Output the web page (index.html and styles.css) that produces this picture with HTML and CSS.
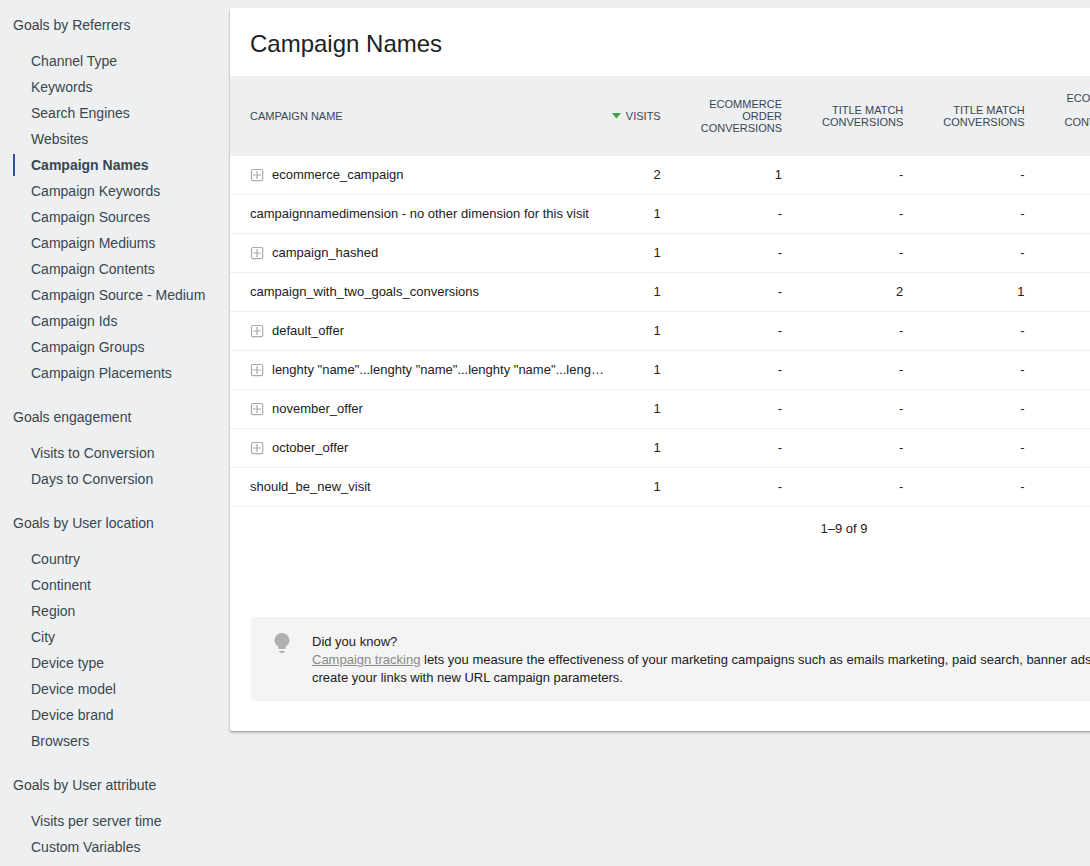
FILE: index.html
```html
<!DOCTYPE html>
<html lang="en">
<head>
<meta charset="utf-8">
<title>Campaign Names</title>
<link rel="stylesheet" href="styles.css">
</head>
<body>
<div class="layout">
<nav class="sidebar">
<h3 class="category">Goals by Referrers</h3>
<ul class="menu"><li>Channel Type</li><li>Keywords</li><li>Search Engines</li><li>Websites</li><li class="active">Campaign Names</li><li>Campaign Keywords</li><li>Campaign Sources</li><li>Campaign Mediums</li><li>Campaign Contents</li><li>Campaign Source - Medium</li><li>Campaign Ids</li><li>Campaign Groups</li><li>Campaign Placements</li></ul>
<h3 class="category">Goals engagement</h3>
<ul class="menu"><li>Visits to Conversion</li><li>Days to Conversion</li></ul>
<h3 class="category">Goals by User location</h3>
<ul class="menu"><li>Country</li><li>Continent</li><li>Region</li><li>City</li><li>Device type</li><li>Device model</li><li>Device brand</li><li>Browsers</li></ul>
<h3 class="category">Goals by User attribute</h3>
<ul class="menu"><li>Visits per server time</li><li>Custom Variables</li></ul>
</nav>
<main class="card">
<h2 class="title">Campaign Names</h2>
<svg class="defs" width="0" height="0"><symbol id="plus" viewBox="0 0 14 14"><rect x="1.500" y="1.500" width="11.200" height="11.200" rx="1.500"/><path d="M7 3v8M3 7h8"/></symbol></svg>
<table class="data">
<colgroup><col class="c-name"><col class="c-visits"><col class="c-num"><col class="c-num"><col class="c-num"><col class="c-num"><col></colgroup>
<thead><tr><th>Campaign Name</th><th><svg class="sort" viewBox="0 0 9 6"><path d="M0 0h9L4.500 5.500z"/></svg>Visits</th><th>Ecommerce<br>Order<br>Conversions</th><th>Title Match<br>Conversions</th><th>Title Match<br>Conversions</th><th>Ecommerce -<br>Order<br>Conversions<br>Rate</th><th></th></tr></thead>
<tbody>
<tr><td><svg class="plus"><use href="#plus"/></svg>ecommerce_campaign</td><td>2</td><td>1</td><td>-</td><td>-</td><td></td><td></td></tr>
<tr><td>campaignnamedimension - no other dimension for this visit</td><td>1</td><td>-</td><td>-</td><td>-</td><td></td><td></td></tr>
<tr><td><svg class="plus"><use href="#plus"/></svg>campaign_hashed</td><td>1</td><td>-</td><td>-</td><td>-</td><td></td><td></td></tr>
<tr><td>campaign_with_two_goals_conversions</td><td>1</td><td>-</td><td>2</td><td>1</td><td></td><td></td></tr>
<tr><td><svg class="plus"><use href="#plus"/></svg>default_offer</td><td>1</td><td>-</td><td>-</td><td>-</td><td></td><td></td></tr>
<tr><td><svg class="plus"><use href="#plus"/></svg>lenghty "name"...lenghty "name"...lenghty "name"...leng…</td><td>1</td><td>-</td><td>-</td><td>-</td><td></td><td></td></tr>
<tr><td><svg class="plus"><use href="#plus"/></svg>november_offer</td><td>1</td><td>-</td><td>-</td><td>-</td><td></td><td></td></tr>
<tr><td><svg class="plus"><use href="#plus"/></svg>october_offer</td><td>1</td><td>-</td><td>-</td><td>-</td><td></td><td></td></tr>
<tr><td>should_be_new_visit</td><td>1</td><td>-</td><td>-</td><td>-</td><td></td><td></td></tr>
</tbody>
</table>
<div class="pages">1–9 of 9</div>
<aside class="tip">
<svg class="bulb" viewBox="0 0 16 21"><path d="M8 0C3.900 0 .5 3.300.500 7.400c0 2.600 1.500 4.800 3.700 6.200v1.500q0 .9.900.9h5.800q.9 0 .9-.9v-1.500c2.200-1.400 3.700-3.600 3.700-6.200C15.500 3.300 12.100 0 8 0zM5 18h6q-.6 2-2 2H7q-1.400 0-2-2z"/></svg>
<p class="tip-text">Did you know?<br><a class="link">Campaign tracking</a> lets you measure the effectiveness of your marketing campaigns such as emails marketing, paid search, banner ads,<br>create your links with new URL campaign parameters.</p>
</aside>
</main>
</div>
</body>
</html>
```
FILE: styles.css
```css
* { box-sizing: border-box; }
html, body { overflow: hidden; }
body { margin: 0; height: 866px; background: #eeeff1; font: 13px/18px "Liberation Sans", Arial, sans-serif; color: #212121; }
.layout { display: flex; align-items: flex-start; width: 1458px; height: 866px; padding-top: 8px; }
.sidebar { flex: 0 0 230px; padding-left: 13px; color: #37474f; font-size: 14px; line-height: 22px; }
.category { margin: 0 0 14px; padding-top: 6px; font-size: 14px; font-weight: 400; line-height: 22px; }
.menu { list-style: none; margin: 0 0 16px; padding: 0; }
.menu li { margin-bottom: 4px; padding-left: 18px; height: 22px; white-space: nowrap; }
.menu .active { padding-left: 16px; border-left: 2px solid #3450a3; font-weight: 700; }
.card { flex: 0 0 1228px; height: 723px; background: #fff; border-radius: 2px; box-shadow: 0 2px 3px rgba(0,0,0,.16), 0 1px 2px rgba(0,0,0,.23); }
.title { margin: 0; height: 68px; padding: 21px 20px 0; font-size: 24px; font-weight: 400; line-height: 30px; }
.defs { display: block; }
.data { width: 100%; table-layout: fixed; border-spacing: 0; border-collapse: separate; }
.c-name { width: 380px; }
.c-visits { width: 62.700px; }
.c-num { width: 121.300px; }
.data th { height: 80px; padding: 0 12px 0 0; background: #eeeff1; color: #37474f; font-size: 11px; font-weight: 400; line-height: 12px; text-align: right; text-transform: uppercase; vertical-align: middle; white-space: nowrap; }
.data td { height: 39px; padding: 0 12px 1px 0; border-bottom: 1px solid #eee; text-align: right; white-space: nowrap; line-height: 18px; }
.data th:first-child, .data td:first-child { padding-left: 20px; padding-right: 0; text-align: left; }
.sort { width: 9px; height: 6px; margin-right: 5px; vertical-align: 1px; fill: #43a047; }
.plus { width: 14px; height: 14px; margin-right: 8px; vertical-align: -3px; fill: none; stroke: #aaa; stroke-width: 1.200; }
.pages { height: 110px; padding-top: 13px; text-align: center; }
.tip { display: flex; margin: 0 21px; height: 84px; padding: 16px 0 0 23px; border-radius: 2px; background: #f4f4f4; }
.bulb { width: 16px; height: 21px; flex: none; margin-right: 22px; fill: #b0b0b0; }
.tip-text { margin: 0; white-space: nowrap; }
.link { color: #8a8a8a; text-decoration: underline; }
```
